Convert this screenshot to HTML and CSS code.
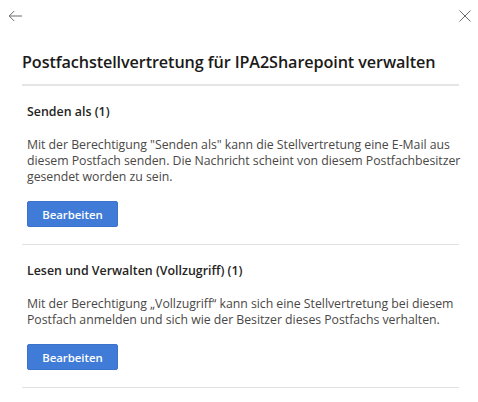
FILE: index.html
```html
<!DOCTYPE html>
<html lang="de">
<head>
<meta charset="utf-8">
<link rel="stylesheet" href="styles.css">
</head>
<body>
<div class="panel">
  <div class="topbar">
    <button class="icon-btn" aria-label="Zurück">
      <svg width="14" height="12" viewBox="0 0 14 12"><path d="M14 6H1.2M6.2 1L1.2 6l5 5" fill="none" stroke="#6b6b6b" stroke-width="1"/></svg>
    </button>
    <button class="icon-btn" aria-label="Schließen">
      <svg width="12" height="12" viewBox="0 0 12 12"><path d="M0.5 0.5l11 11M11.5 0.5l-11 11" fill="none" stroke="#6b6b6b" stroke-width="1"/></svg>
    </button>
  </div>
  <h1 class="title">Postfachstellvertretung für IPA2Sharepoint verwalten</h1>
  <section class="section">
    <h2 class="sec-title">Senden als (1)</h2>
    <p class="sec-text">Mit der Berechtigung "Senden als" kann die Stellvertretung eine E-Mail aus diesem Postfach senden. Die Nachricht scheint von diesem Postfachbesitzer gesendet worden zu sein.</p>
    <button class="btn">Bearbeiten</button>
  </section>
  <section class="section">
    <h2 class="sec-title">Lesen und Verwalten (Vollzugriff) (1)</h2>
    <p class="sec-text">Mit der Berechtigung „Vollzugriff“ kann sich eine Stellvertretung bei diesem Postfach anmelden und sich wie der Besitzer dieses Postfachs verhalten.</p>
    <button class="btn">Bearbeiten</button>
  </section>
</div>
</body>
</html>
```
FILE: styles.css
```css
* { box-sizing: border-box; }
html, body { margin: 0; padding: 0; background: #fff; }
body { font-family: "Open Sans", "Noto Sans", sans-serif; color: #252423; }
.panel { width: 478px; height: 402px; overflow: hidden; }
.topbar { display: flex; justify-content: space-between; align-items: center; padding: 0 6px 0 8px; height: 32px; }
.icon-btn { background: none; border: 0; padding: 0; width: 14px; height: 14px; display: flex; align-items: center; justify-content: center; }
.title { margin: 18px 19px 0 22px; font-size: 16.2px; font-weight: 600; line-height: 24px; padding-bottom: 10px; border-bottom: 2px solid #e5e5e5; color: #1b1a19; letter-spacing: -0.1px; white-space: nowrap; }
.section { margin: 0 19px 0 22px; padding: 16px 0 17px 5px; border-bottom: 1px solid #e1e1e1; }
.sec-title { margin: 0; font-size: 12.4px; font-weight: 600; line-height: 20px; color: #252423; }
.sec-text { margin: 15px -9px 0 0; font-size: 12.3px; line-height: 16px; color: #4a4846; letter-spacing: -0.03px; }
.btn { display: block; margin-top: 16px; width: 91px; height: 26px; background: #3f7bd7; color: #fff; border: 1px solid #3a72cc; border-radius: 2px; font-family: inherit; font-size: 11.4px; font-weight: 600; padding: 0; }
```
